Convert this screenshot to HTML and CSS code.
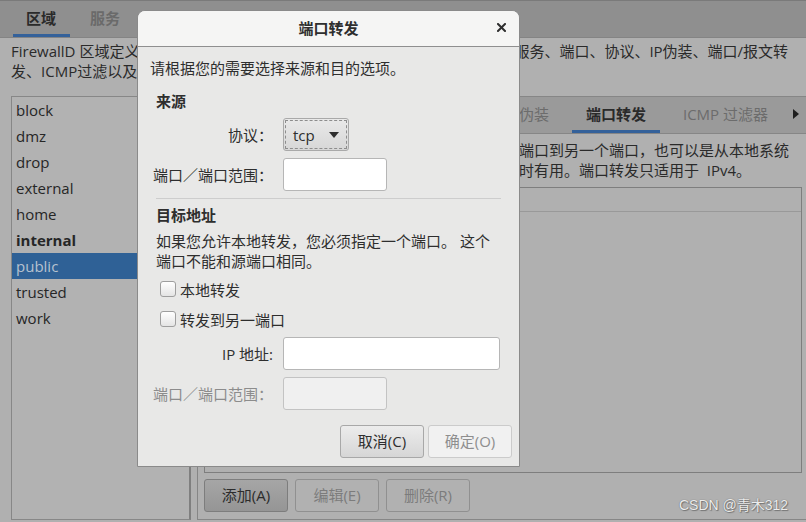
FILE: index.html
```html
<!DOCTYPE html>
<html lang="zh-CN">
<head>
<meta charset="utf-8">
<title>端口转发</title>
<link rel="stylesheet" href="styles.css">
</head>
<body>
<div class="app">
  <div class="topbar">
    <div class="toptab active">区域</div>
    <div class="toptab">服务</div>
  </div>
  <div class="desc">
    <div class="line">FirewallD 区域定义了绑定的网络连接、接口以及源地址的可信程度。区域是服务、端口、协议、IP伪装、端口/报文转</div>
    <div class="line">发、ICMP过滤以及富规则的组合。区域可以绑定到接口以及源地址。</div>
  </div>
  <div class="main">
    <div class="zones">
      <div class="zone">block</div>
      <div class="zone">dmz</div>
      <div class="zone">drop</div>
      <div class="zone">external</div>
      <div class="zone">home</div>
      <div class="zone bold">internal</div>
      <div class="zone selected">public</div>
      <div class="zone">trusted</div>
      <div class="zone">work</div>
    </div>
    <div class="notebook">
      <div class="nb-tabs">
        <div class="nb-tablist">
          <div class="nb-tab">服务</div>
          <div class="nb-tab">端口</div>
          <div class="nb-tab">协议</div>
          <div class="nb-tab">源端口</div>
          <div class="nb-tab">伪装</div>
          <div class="nb-tab active">端口转发</div>
          <div class="nb-tab">ICMP 过滤器</div>
        </div>
        <div class="nb-arrow"><svg width="6" height="10" viewBox="0 0 6 10"><path d="M0 0 L6 5 L0 10 Z" fill="#1e1e1e"/></svg></div>
      </div>
      <div class="nb-body">
        <div class="nb-text">
          <div class="line">添加条目来转发端口，可以是从本地系统的一个端口到另一个端口，也可以是从本地系统</div>
          <div class="line">到另一个系统。转发到其他系统只在接口被伪装时有用。端口转发只适用于 &nbsp;IPv4。</div>
        </div>
        <div class="table">
          <div class="table-head"></div>
        </div>
        <div class="nb-buttons">
          <div class="btn-dim">添加(A)</div>
          <div class="btn-dim disabled">编辑(E)</div>
          <div class="btn-dim disabled">删除(R)</div>
        </div>
      </div>
    </div>
  </div>
</div>

<div class="watermark">CSDN @青木312</div>

<div class="dialog">
  <div class="dlg-header">
    <div></div>
    <div class="dlg-title">端口转发</div>
    <div class="dlg-close"><svg width="9" height="9" viewBox="0 0 9 9"><path d="M1 1 L8 8 M8 1 L1 8" stroke="#2e2e2e" stroke-width="2" stroke-linecap="square"/></svg></div>
  </div>
  <div class="dlg-body">
    <div class="dlg-intro">请根据您的需要选择来源和目的选项。</div>
    <div class="section">
      <div class="sec-title src-title">来源</div>
      <div class="form src-form">
        <div class="label">协议<span class="colon">：</span></div>
        <div class="combo"><span>tcp</span><svg width="10" height="6" viewBox="0 0 10 6"><path d="M0 0 L10 0 L5 6 Z" fill="#2e2e2e"/></svg></div>
        <div class="label">端口／端口范围<span class="colon">：</span></div>
        <div class="entry short"></div>
      </div>
      <div class="separator"></div>
      <div class="sec-title dst-title">目标地址</div>
      <div class="para">如果您允许本地转发，您必须指定一个端口。 这个<br>端口不能和源端口相同。</div>
      <div class="checks">
        <div class="check"><span class="box"></span><span>本地转发</span></div>
        <div class="check"><span class="box"></span><span>转发到另一端口</span></div>
      </div>
      <div class="form dst-form">
        <div class="label">IP 地址:</div>
        <div class="entry long"></div>
        <div class="label muted">端口／端口范围<span class="colon">：</span></div>
        <div class="entry short disabled"></div>
      </div>
    </div>
    <div class="dlg-actions">
      <div class="btn">取消(C)</div>
      <div class="btn disabled">确定(O)</div>
    </div>
  </div>
</div>
</body>
</html>
```

FILE: styles.css
```css
* { box-sizing: border-box; }
html, body { margin: 0; padding: 0; }
body {
  width: 806px;
  height: 522px;
  overflow: hidden;
  position: relative;
  background: #b0b0b0;
  font-family: "Open Sans", "Noto Sans CJK SC", sans-serif;
  font-size: 15px;
  color: #2a2a2a;
}
.app { display: flex; flex-direction: column; height: 522px; }

.topbar {
  height: 38px;
  background: #8f8f8f;
  border-top: 1px solid #7a7a7a;
  border-bottom: 1px solid #848484;
  display: flex;
  gap: 7px;
  padding-left: 13px;
}
.toptab {
  height: 36px;
  padding: 2px 14px 0 13px;
  line-height: 31px;
  color: #6a6a6a;
  border-bottom: 3px solid transparent;
  font-weight: bold;
}
.toptab.active { color: #2a2a2a; border-bottom-color: #34619a; }

.desc { height: 58px; padding: 3px 11px 0; line-height: 20px; }
.line { white-space: nowrap; line-height: 20px; }

.main { flex: 1; display: flex; padding-bottom: 2px; }
.zones {
  margin-left: 11px;
  width: 180px;
  border: 1px solid #878787;
  border-right: 2px solid #7f7f7f;
  background: #b2b2b2;
}
.zone { height: 26px; line-height: 26px; padding-left: 4px; color: #262626; }
.zone.bold { font-weight: bold; }
.zone.selected { background: #2f6196; color: #b7c2cf; }

.notebook {
  flex: 1;
  margin-left: 6px;
  border: 1px solid #868686;
  border-right: none;
  display: flex;
  flex-direction: column;
}
.nb-tabs {
  height: 37px;
  background: #9a9a9a;
  border-bottom: 1px solid #868686;
  display: flex;
}
.nb-tablist {
  flex: 1;
  display: flex;
  justify-content: flex-end;
  gap: 9px;
  overflow: hidden;
}
.nb-tab {
  flex: none;
  height: 36px;
  padding: 2px 14px 0;
  line-height: 31px;
  color: #6c6c6c;
  border-bottom: 3px solid transparent;
  white-space: nowrap;
}
.nb-tab.active { color: #2a2a2a; font-weight: bold; border-bottom-color: #34619a; }
.nb-arrow { width: 24px; display: flex; align-items: center; padding-left: 11px; padding-bottom: 3px; }

.nb-body {
  flex: 1;
  display: flex;
  flex-direction: column;
  padding: 6px 4px 7px 6px;
}
.nb-text { height: 40px; color: #2a2a2a; }
.table {
  flex: 1;
  margin-top: 7px;
  border: 1px solid #7e7e7e;
}
.table-head { height: 24px; border-bottom: 1px solid #999999; }
.nb-buttons { display: flex; gap: 7px; margin-top: 6px; }
.btn-dim {
  width: 84px;
  height: 33px;
  line-height: 31px;
  text-align: center;
  border: 1px solid #7d7d7d;
  border-radius: 3px;
  background: linear-gradient(#a6a6a6, #959595);
  color: #2c2c2c;
}
.btn-dim.disabled { background: #b1b1b1; border-color: #909090; color: #7c7c7c; }

.watermark {
  position: absolute;
  left: 679px;
  top: 495px;
  font-family: "Liberation Sans", "Noto Sans CJK SC", sans-serif;
  font-size: 14px;
  line-height: 20px;
  color: #ececec;
  text-shadow: 0 0 1px #555, 1px 1px 1px #777;
}

.dialog {
  position: absolute;
  left: 137px;
  top: 10px;
  width: 383px;
  height: 457px;
  border: 1px solid #8a8a8a;
  border-radius: 8px 8px 0 0;
  background: #e8e8e7;
  display: flex;
  flex-direction: column;
  overflow: hidden;
}
.dlg-header {
  height: 36px;
  background: #f5f5f4;
  border-bottom: 1px solid #8f8f8f;
  display: grid;
  grid-template-columns: 1fr auto 1fr;
  align-items: center;
}
.dlg-title { font-weight: bold; line-height: 33px; color: #2e2e2e; }
.dlg-close { justify-self: end; margin-right: 13px; display: flex; padding-bottom: 2px; }

.dlg-body {
  flex: 1;
  display: flex;
  flex-direction: column;
  padding: 11px 18px 0 12px;
  color: #2e2e2e;
}
.dlg-intro { line-height: 20px; }
.section { margin-left: 6px; display: flex; flex-direction: column; }
.sec-title { font-weight: bold; line-height: 20px; }
.src-title { margin-top: 13px; }
.form {
  display: grid;
  grid-template-columns: 117px auto;
  column-gap: 10px;
  row-gap: 7px;
  align-items: center;
  justify-items: start;
}
.src-form { margin-top: 7px; }
.dst-form { margin-top: 3px; }
.label { justify-self: end; white-space: nowrap; line-height: 20px; }
.colon { display: inline-block; width: 15px; text-align: center; }
.label.muted { color: #8c8c8c; }
.combo {
  width: 66px;
  height: 33px;
  border: 1px solid #a9a9a9;
  border-radius: 3px;
  background: linear-gradient(#e9e9e9, #d7d7d7);
  outline: 1px dashed #8d8d8d;
  outline-offset: -3px;
  display: flex;
  align-items: center;
  gap: 14px;
  padding: 0 0 0 9px;
  line-height: 20px;
  color: #2e2e2e;
}
.entry {
  height: 33px;
  background: #ffffff;
  border: 1px solid #b6b6b6;
  border-radius: 3px;
}
.entry.short { width: 104px; }
.entry.long { width: 217px; }
.entry.disabled { background: #f0f0f0; border-color: #c3c3c3; }

.separator { height: 1px; background: #cdcdcd; margin-top: 7px; }
.dst-title { margin-top: 6px; }
.para { margin-top: 6px; line-height: 20px; }
.checks { margin-top: 3px; display: flex; flex-direction: column; }
.check { height: 30px; display: flex; align-items: center; gap: 4px; padding-left: 4px; }
.box {
  width: 16px;
  height: 16px;
  border: 1px solid #9e9e9e;
  border-radius: 3px;
  background: linear-gradient(#ffffff, #e4e4e4);
}

.dlg-actions {
  display: flex;
  justify-content: flex-end;
  gap: 4px;
  margin-top: 15px;
  margin-right: -11px;
}
.btn {
  width: 84px;
  height: 33px;
  line-height: 31px;
  text-align: center;
  border: 1px solid #a8a8a8;
  border-radius: 3px;
  background: linear-gradient(#ececec, #d6d6d6);
  color: #2e2e2e;
}
.btn.disabled { background: #f1f1f1; border-color: #cbcbcb; color: #8e8e8e; }
```
